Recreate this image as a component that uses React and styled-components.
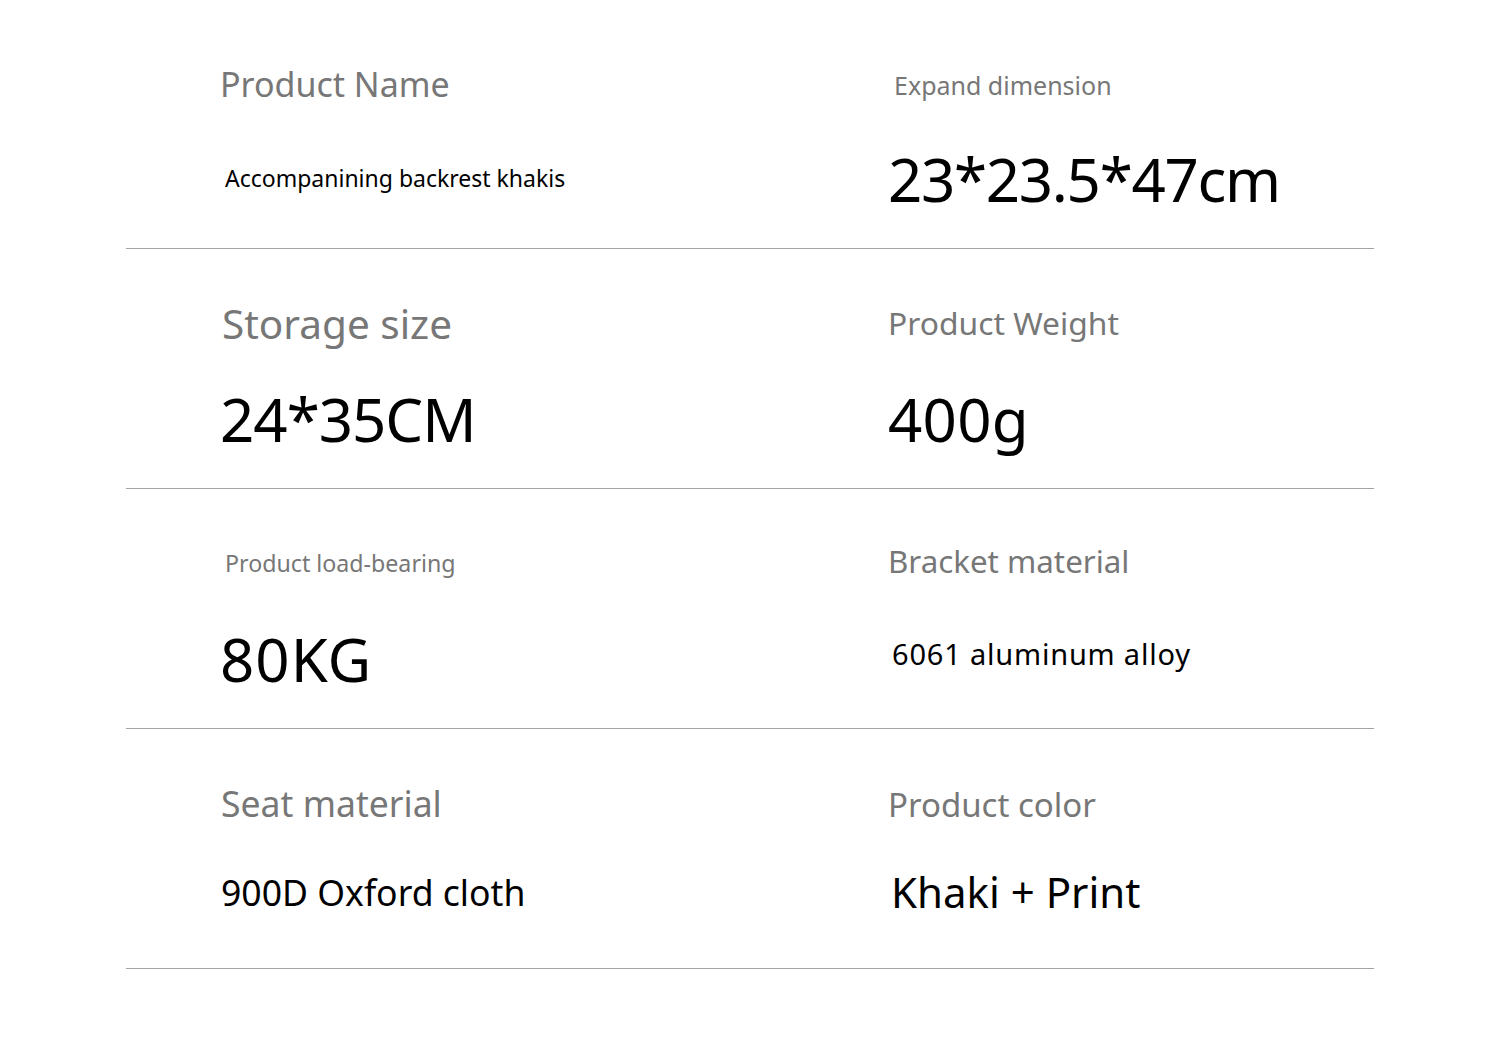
import * as React from 'react';
import styled, {createGlobalStyle} from 'styled-components';

const Global = createGlobalStyle`
  body {
    margin: 0;
    background: #fff;
    font-family: "Noto Sans", "Open Sans", sans-serif;
  }
`;

const Page = styled.div`
  width: 1500px;
  height: 1046px;
  padding-top: 9px;
  box-sizing: border-box;
  display: flex;
  justify-content: center;
`;

const Table = styled.div`
  width: 1248px;
  display: flex;
  flex-direction: column;
`;

const Row = styled.div`
  height: 240px;
  box-sizing: border-box;
  border-bottom: 1px solid #a3a3a3;
  display: grid;
  grid-template-columns: 668px 1fr;
  padding-left: 94px;
`;

const Cell = styled.div`
  display: grid;
  grid-template-rows: 120px 120px;
  padding-left: ${p => p.shift || 0}px;
`;

// base = distance of the text baseline from the top of its slot
const Label = styled.div`
  font-size: ${p => p.size}px;
  line-height: 1;
  color: #777;
  white-space: nowrap;
  padding-top: ${p => p.base - 0.888 * p.size}px;
`;

const Value = styled.div`
  font-size: ${p => p.size}px;
  line-height: 1;
  color: #000;
  white-space: nowrap;
  letter-spacing: ${p => p.track || 0}px;
  margin-left: ${p => p.indent || 0}px;
  padding-top: ${p => p.base - 0.888 * p.size}px;
`;

const rows = [
    [
        {label: 'Product Name', ls: 34, lb: 88, value: 'Accompanining backrest khakis', vs: 23, vb: 58, indent: 5},
        {label: 'Expand dimension', ls: 25, lb: 86, value: '23*23.5*47cm', vs: 60, vb: 73, shift: 6, indent: -6, track: -1.3},
    ],
    [
        {label: 'Storage size', ls: 40.5, lb: 91, value: '24*35CM', vs: 60, vb: 73, shift: 2, indent: -2, track: -1},
        {label: 'Product Weight', ls: 31.8, lb: 86, value: '400g', vs: 60, vb: 73, track: 0.3},
    ],
    [
        {label: 'Product load-bearing', ls: 23.2, lb: 84, value: '80KG', vs: 60, vb: 73, shift: 5, indent: -5, track: 1},
        {label: 'Bracket material', ls: 31.3, lb: 85, value: '6061 aluminum alloy', vs: 29, vb: 56, indent: 4, track: 0.8},
    ],
    [
        {label: 'Seat material', ls: 35.6, lb: 89, value: '900D Oxford cloth', vs: 35.6, vb: 58, shift: 1},
        {label: 'Product color', ls: 33, lb: 88, value: 'Khaki + Print', vs: 42, vb: 59, indent: 3},
    ],
];

export default function App() {
    return <Page>
        <Global/>
        <Table>
            {rows.map((row, i) => (
                <Row key={i}>
                    {row.map(c => (
                        <Cell key={c.label} shift={c.shift}>
                            <Label size={c.ls} base={c.lb}>{c.label}</Label>
                            <Value size={c.vs} base={c.vb} track={c.track} indent={c.indent}>{c.value}</Value>
                        </Cell>
                    ))}
                </Row>
            ))}
        </Table>
    </Page>;
}
